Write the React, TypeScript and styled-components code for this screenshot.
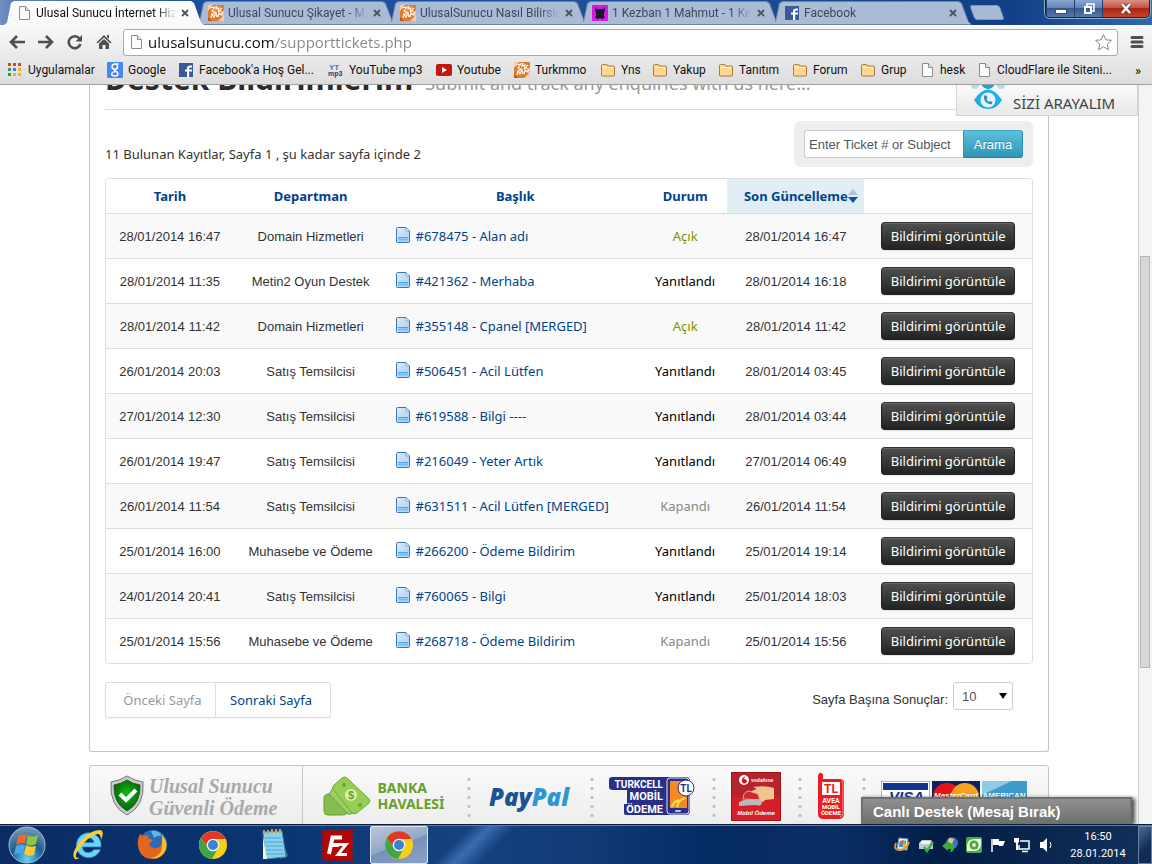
import React from "react";
import styled, { createGlobalStyle, css } from "styled-components";

const uiFont = `Roboto, "Open Sans", sans-serif`;
const siteFont = `"Noto Sans", "Open Sans", sans-serif`;
const plainFont = `"Liberation Sans", Arial, sans-serif`;

const GlobalStyle = createGlobalStyle`
  * { box-sizing: border-box; }
  body { margin: 0; background: #fff; font-family: ${plainFont}; font-size: 13px; color: #333; }
  button, input, select { font: inherit; margin: 0; }
  a { text-decoration: none; color: inherit; }
  svg { display: block; flex: none; }
`;

const Desktop = styled.div`
  display: flex;
  flex-direction: column;
  height: 100vh;
  overflow: hidden;
`;

/* ---------- browser frame ---------- */

const TitleBar = styled.div`
  display: flex;
  height: 25px;
  padding-left: 4px;
  background: linear-gradient(90deg, #6f8fc0 0, #5b7fb8 16px, #1c509c 200px, #1d4e9a 60%, #123f86 88%, #2f6aa8 100%);
`;

const TabList = styled.div`
  display: flex;
  align-items: flex-end;
  flex: 0 1 960px;
  min-width: 0;
`;

const Tab = styled.div<{ $active?: boolean }>`
  position: relative;
  display: flex;
  align-items: center;
  flex: 1 1 200px;
  min-width: 0;
  height: 24px;
  padding: 0 10px 0 12px;
  margin-right: -8px;
  z-index: ${(p) => (p.$active ? 2 : 1)};
  &::before, &::after {
    content: "";
    position: absolute;
    z-index: -1;
    inset: 0;
    clip-path: polygon(0 100%, 3px 90%, 7px 8%, 10px 0, calc(100% - 13px) 0, calc(100% - 10px) 8%, calc(100% - 3px) 90%, 100% 100%);
    background: ${(p) => (p.$active ? "#fff" : "#70839f")};
  }
  &::after {
    inset: 1px 1px ${(p) => (p.$active ? 0 : 1)}px 1px;
    background: ${(p) => (p.$active ? "linear-gradient(#fff, #f8f8f8)" : "#aabbd6")};
  }
`;

const TabTitle = styled.button<{ $active?: boolean }>`
  flex: 1;
  min-width: 0;
  padding: 0;
  margin-left: 4px;
  border: 0;
  background: none;
  text-align: left;
  overflow: hidden;
  white-space: nowrap;
  font-family: ${uiFont};
  font-size: 12px;
  line-height: 20px;
  color: ${(p) => (p.$active ? "#111" : "#3d4858")};
  mask-image: linear-gradient(90deg, #000 calc(100% - 20px), transparent);
`;

const TabClose = styled.button`
  padding: 0 3px;
  margin: 0 2px;
  border: 0;
  background: none;
`;

const NewTab = styled.button`
  align-self: center;
  width: 30px;
  height: 15px;
  margin-left: 8px;
  border: 1px solid #7f96bb;
  border-radius: 3px;
  background: #a9bad6;
  transform: skewX(20deg);
`;

const WindowControls = styled.div`
  display: flex;
  height: 18px;
  margin: 0 2px 0 auto;
  border: 1px solid #14233f;
  border-top: 0;
  border-radius: 0 0 5px 5px;
  overflow: hidden;
  box-shadow: 0 0 0 1px #8fa9cc;
`;

const WindowButton = styled.button<{ $close?: boolean }>`
  display: flex;
  align-items: center;
  justify-content: center;
  width: ${(p) => (p.$close ? 47 : 28)}px;
  padding: 0;
  border: 0;
  border-left: 1px solid #26406c;
  background: ${(p) =>
    p.$close
      ? "linear-gradient(#d99285, #c6533f 45%, #a82615 50%, #c8442a)"
      : "linear-gradient(#8ba6cf, #6484b8 45%, #36598f 50%, #5579ad)"};
`;

const Chrome = styled.header`
  border-top: 1px solid #fff;
  border-bottom: 1px solid #a0a0a0;
  background: linear-gradient(#f8f8f8, #dddddd);
  font-family: ${uiFont};
`;

const Toolbar = styled.div`
  display: flex;
  align-items: center;
  height: 32px;
  padding: 0 8px;
`;

const ToolButton = styled.button`
  display: flex;
  padding: 0;
  margin-right: 11px;
  border: 0;
  background: none;
`;

const AddressBar = styled.label`
  display: flex;
  align-items: center;
  flex: 1;
  height: 27px;
  padding: 0 4px;
  margin: 0 12px 0 0;
  border: 1px solid #a9a9a9;
  border-radius: 3px;
  background: #fff;
`;

const AddressInput = styled.input`
  flex: 1;
  min-width: 0;
  padding: 0;
  margin-left: 4px;
  border: 0;
  outline: 0;
  font-family: "Open Sans", "Noto Sans", sans-serif;
  font-size: 15px;
  line-height: 24px;
  color: transparent;
  background: linear-gradient(90deg, #111 127px, #858585 127px);
  background-clip: text;
  -webkit-background-clip: text;
`;

const Bookmarks = styled.nav`
  display: flex;
  align-items: center;
  height: 26px;
  padding: 0 11px 2px 7px;
  font-size: 12px;
  color: #111;
  white-space: nowrap;
`;

const Bookmark = styled.a<{ $width: number }>`
  display: flex;
  align-items: center;
  gap: 5px;
  flex: 0 0 ${(p) => p.$width}px;
`;

const More = styled.button`
  margin-left: auto;
  padding: 0;
  border: 0;
  background: none;
  font-size: 13px;
`;

/* ---------- web page ---------- */

const Viewport = styled.div`
  display: flex;
  flex: 1;
  min-height: 0;
`;

const PageArea = styled.div`
  position: relative;
  flex: 1;
  min-width: 0;
  overflow: hidden;
`;

const ScrollTrack = styled.div`
  width: 14px;
  padding: 171px 1px 0;
  border-left: 1px solid #d0d0d0;
  background: #f4f4f4;
`;

const ScrollThumb = styled.div`
  width: 10px;
  height: 412px;
  border: 1px solid #b4b4b4;
  background: #d8d8d8;
`;

const Card = styled.main`
  max-width: 960px;
  margin: 0 auto;
  padding: 0 15px 33px;
  border: 1px solid #c4c4c4;
  border-top: 0;
  border-radius: 0 0 3px 3px;
`;

const TitleRow = styled.div`
  display: flex;
  align-items: flex-end;
  height: 25px;
  padding-bottom: 12px;
  border-bottom: 1px solid #ddd;
  font-family: ${siteFont};
`;

const PageTitle = styled.h1`
  margin: 0;
  font-size: 30px;
  line-height: 36px;
  color: #2b2b2b;
  white-space: nowrap;
`;

const Subtitle = styled.small`
  margin-left: 12px;
  font-size: 18px;
  line-height: 28px;
  color: #999;
  white-space: nowrap;
`;

const SearchRow = styled.div`
  display: flex;
  align-items: center;
  justify-content: space-between;
  margin: 11px 0;
`;

const Summary = styled.p`
  margin: 20px 0 0;
  font-family: ${siteFont};
  font-size: 13px;
`;

const SearchForm = styled.form`
  display: flex;
  padding: 9px 10px;
  border-radius: 6px;
  background: #eee;
`;

const SearchInput = styled.input`
  width: 159px;
  height: 28px;
  padding: 0 4px;
  border: 1px solid #ccc;
  border-right: 0;
  border-radius: 3px 0 0 3px;
  font-size: 13px;
  &::placeholder { color: #555; opacity: 1; }
`;

const SearchButton = styled.button`
  width: 60px;
  height: 28px;
  padding: 0;
  border: 1px solid #2f96b4;
  border-color: #46a5c3 #2f96b4 #24829f;
  border-radius: 0 3px 3px 0;
  background: linear-gradient(#5bc0de, #2f96b4);
  color: #fff;
  font-size: 13px;
  text-shadow: 0 -1px 0 rgba(0, 0, 0, 0.25);
`;

const TableFrame = styled.div`
  border: 1px solid #ddd;
  border-radius: 4px;
  overflow: hidden;
`;

const Table = styled.table`
  width: 100%;
  table-layout: fixed;
  border-collapse: separate;
  border-spacing: 0;
  text-align: center;
`;

const HeadCell = styled.th<{ $width: string; $sorted?: boolean }>`
  width: ${(p) => p.$width};
  height: 34px;
  padding: 0;
  background: ${(p) => (p.$sorted ? "#e1eef4" : "#fff")};
  font-family: ${siteFont};
  font-size: 13px;
`;

const HeadLink = styled.a<{ $sorted?: boolean }>`
  display: inline-flex;
  align-items: center;
  padding-left: ${(p) => (p.$sorted ? 10 : 0)}px;
  color: #00438a;
`;

const Row = styled.tr`
  &:nth-child(odd) { background: #f9f9f9; }
`;

const Cell = styled.td<{ $left?: boolean }>`
  height: 45px;
  padding: 0 ${(p) => (p.$left ? 8 : 0)}px;
  border-top: 1px solid #ddd;
  text-align: ${(p) => (p.$left ? "left" : "center")};
  white-space: nowrap;
`;

const TicketLink = styled.a`
  display: flex;
  align-items: center;
  gap: 4px;
  font-family: ${siteFont};
  font-size: 13px;
  color: #00438a;
`;

const Status = styled.span<{ $tone: string }>`
  font-family: ${siteFont};
  font-size: 13px;
  color: ${(p) => p.$tone};
`;

const ViewButton = styled.button`
  width: 134px;
  height: 28px;
  padding: 0;
  border: 1px solid #222;
  border-top-color: #333;
  border-radius: 4px;
  background: linear-gradient(#505050, #222);
  box-shadow: inset 0 1px 0 #666, 0 1px 1px rgba(0, 0, 0, 0.1);
  color: #fff;
  font-family: ${siteFont};
  font-size: 13px;
`;

const BottomRow = styled.div`
  display: flex;
  align-items: flex-start;
  justify-content: space-between;
  margin-top: 18px;
`;

const Pager = styled.nav`
  display: flex;
  border: 1px solid #ddd;
  border-radius: 3px;
  box-shadow: 0 1px 2px rgba(0, 0, 0, 0.05);
  font-family: ${siteFont};
  font-size: 13px;
  line-height: 34px;
`;

const PagerLink = styled.a<{ $off?: boolean }>`
  width: ${(p) => (p.$off ? 110 : 114)}px;
  padding-right: ${(p) => (p.$off ? 0 : 4)}px;
  padding-left: ${(p) => (p.$off ? 4 : 0)}px;
  border-right: ${(p) => (p.$off ? "1px solid #ddd" : "0")};
  color: ${(p) => (p.$off ? "#999" : "#00438a")};
  text-align: center;
`;

const PerPage = styled.div`
  display: flex;
  align-items: center;
  gap: 5px;
  margin-right: 20px;
  font-size: 13px;
`;

const PerPageLabel = styled.label`
  padding-top: 6px;
`;

const SelectWrap = styled.span`
  position: relative;
  &::after {
    content: "";
    position: absolute;
    right: 6px;
    top: 11px;
    border: 4px solid transparent;
    border-top: 6px solid #000;
    border-bottom: 0;
    pointer-events: none;
  }
`;

const PerPageSelect = styled.select`
  appearance: none;
  display: block;
  width: 60px;
  height: 28px;
  padding: 0 8px;
  border: 1px solid #ccc;
  border-radius: 3px;
  background: #fff;
  color: #555;
`;

const CallWidget = styled.a`
  position: absolute;
  top: 0;
  right: 0;
  display: flex;
  align-items: flex-end;
  gap: 8px;
  width: 182px;
  height: 31px;
  padding: 0 0 3px 14px;
  border: 1px solid #d5d5d5;
  border-top: 0;
  background: linear-gradient(#fafafa, #e9e9e9);
  font-family: ${siteFont};
  font-size: 15px;
  line-height: 18px;
  color: #444;
  white-space: nowrap;
`;

const Payments = styled.footer`
  display: flex;
  max-width: 960px;
  height: 90px;
  margin: 13px auto 0;
  border: 1px solid #c4c4c4;
  border-radius: 3px;
  background: linear-gradient(#fafafa, #ededed 58px);
`;

const Secure = styled.div`
  display: flex;
  gap: 4px;
  width: 213px;
  padding: 9px 0 0 19px;
  border-right: 1px solid #c8c8c8;
  font-family: "Liberation Serif", serif;
  font-style: italic;
  font-weight: bold;
  font-size: 20px;
  line-height: 22px;
  color: #a9a9a9;
  white-space: nowrap;
`;

const Method = styled.div<{ $width: number; $last?: boolean }>`
  display: flex;
  align-items: center;
  justify-content: center;
  width: ${(p) => p.$width}px;
  height: 59px;
  padding: 9px 0 8px;
  ${(p) =>
    !p.$last &&
    css`
      background: radial-gradient(circle, #bdbdbd 1px, transparent 2px) right 0 / 4px 9px repeat-y content-box;
    `}
  & > * { margin-right: ${(p) => (p.$last ? 0 : 7)}px; }
`;

const BankText = styled.span`
  font-family: "Noto Sans", sans-serif;
  font-size: 14px;
  font-weight: bold;
  line-height: 16px;
  color: #689f2b;
`;

const PayPalText = styled.span`
  font-family: "Open Sans", sans-serif;
  font-size: 24px;
  font-weight: 800;
  font-style: italic;
  color: #1a5496;
`;

const PayPalTail = styled.span`
  color: #2f96d6;
`;

const ChatBar = styled.button`
  position: absolute;
  right: 6px;
  bottom: 0;
  width: 271px;
  height: 27px;
  padding: 0 0 0 10px;
  border: 2px solid #6b7072;
  border-bottom: 0;
  background: linear-gradient(#909090, #6e6e6e);
  box-shadow: 3px 1px 4px rgba(0, 0, 0, 0.7);
  color: #fff;
  font-size: 15px;
  font-weight: bold;
  text-align: left;
`;

/* ---------- task bar ---------- */

const TaskBar = styled.div`
  display: flex;
  align-items: center;
  height: 40px;
  border-top: 1px solid #0b1d38;
  box-shadow: inset 0 1px 0 #5a7ba6;
  background:
    linear-gradient(135deg, transparent 0 334px, rgba(90, 150, 225, 0.5) 348px, transparent 366px) no-repeat,
    linear-gradient(90deg, #0a2c62, #0b3574 25%, #16427f 40%, #123b78 50%, #052b63 62%, #0a2f66 72%, #021d45 82%, #12305a);
`;

const TaskButton = styled.button<{ $active?: boolean; $width?: number }>`
  display: flex;
  align-items: center;
  justify-content: center;
  width: ${(p) => p.$width ?? 62}px;
  height: 38px;
  padding: 0;
  border: 0;
  background: none;
  ${(p) =>
    p.$active &&
    css`
      border: 1px solid #dde6f2;
      border-radius: 2px;
      background: linear-gradient(160deg, #b9c7da, #93a7c6 50%, #7690ba 50%, #8ba3c8);
    `}
`;

const Tray = styled.div`
  display: flex;
  align-items: center;
  gap: 8px;
  margin-left: auto;
`;

const Clock = styled.time`
  width: 56px;
  margin: 0 4px 0 8px;
  font-family: ${uiFont};
  font-size: 11px;
  line-height: 17px;
  text-align: center;
  color: #fff;
`;

const ShowDesktop = styled.button`
  width: 14px;
  height: 38px;
  padding: 0;
  border: 1px solid #6481a8;
  background: linear-gradient(135deg, #4f6b92, #122c54 60%);
`;

/* ---------- drawings ---------- */

const FileIcon = () => (
  <svg width="16" height="16" viewBox="0 0 16 16">
    <path d="M3.5 1.5h6l4 4v9h-10z" fill="#fafafa" stroke="#8c8c8c" />
    <path d="M9.500 1.500v4h4" fill="#e6e6e6" stroke="#8c8c8c" />
  </svg>
);

const TurkmmoIcon = () => (
  <svg width="16" height="16" viewBox="0 0 16 16">
    <rect width="16" height="16" rx="1" fill="#d97d33" />
    <path d="M0 0h5L0 6zM10 16h6v-6z" fill="#f8cf9f" />
    <path d="M0 12l4 4H0z" fill="#b4591c" />
    <path d="M2 3l5-1-3 4 3 1-2 2M9 1l-1 3 3-1-1 4M14 3l-3 3 3 1M3 13l1-4 2 3 2-4 1 4M10 12l1-4 2 2 2-3v4" fill="none" stroke="#fff3e2" strokeWidth="1.200" />
  </svg>
);

const FacebookIcon = () => (
  <svg width="16" height="14" viewBox="0 0 16 14">
    <rect x="1" width="14" height="14" fill="#3b5998" />
    <path d="M14 2.500H12C10 2.500 9 3.500 9 5v1.500H7V8.500h2V14h2.200V8.500H14V6.500h-2.800V5.200q0-.7.900-.7H14z" fill="#fff" />
  </svg>
);

const KezbanIcon = () => (
  <svg width="16" height="16" viewBox="0 0 16 16">
    <rect width="16" height="16" rx="1" fill="#d916e6" />
    <path d="M3 2l2 2h6l2-2v4l-1 1v4l1 2h-2v1H9v-1H7v1H5v-1H3l1-2V7L3 6z" fill="#111a24" />
  </svg>
);

const AppsIcon = () => {
  const colors = ["#e2402c", "#e2402c", "#e2402c", "#2f9e4f", "#3f7fe8", "#f2b01e", "#2f9e4f", "#f2b01e", "#f2b01e"];
  return (
    <svg width="16" height="14" viewBox="0 0 16 14">
      {colors.map((c, i) => (
        <rect key={i} x={(i % 3) * 5 + 1} y={Math.floor(i / 3) * 5} width="3" height="3" fill={c} />
      ))}
    </svg>
  );
};

const GoogleIcon = () => (
  <svg width="16" height="16" viewBox="0 0 16 16">
    <rect width="16" height="16" rx="1" fill="#4787f3" />
    <path d="M11.500 2H8C6 2 5 3.300 5 4.800S6.200 7.300 8 7.300 10.500 6 10.500 4.800 9.500 2 8 2M8 7.300C7 8.500 7.800 9 9 9.500c1.500.7 2 1.300 2 2.200C11 13.300 9.500 14 7.800 14S4.700 13.200 4.700 12 6 9.800 8.500 9.600" fill="none" stroke="#fff" strokeWidth="1.400" />
  </svg>
);

const Mp3Icon = () => (
  <svg width="16" height="16" viewBox="0 0 16 16" fontFamily="Liberation Sans, sans-serif" fontWeight="bold">
    <text x="1" y="8" fontSize="8" fill="#5673c4">YT</text>
    <text x="0" y="14" fontSize="7" fill="#2c3c7c">mp3</text>
  </svg>
);

const YoutubeIcon = () => (
  <svg width="16" height="16" viewBox="0 0 16 16">
    <rect y="2" width="16" height="12" rx="2" fill="#c4170f" />
    <path d="M6 5v6l5-3z" fill="#fff" />
  </svg>
);

const FolderIcon = () => (
  <svg width="16" height="16" viewBox="0 0 16 16">
    <path d="M1.500 3.500q0-1 1-1h4q1 0 1 1.500h6q1 0 1 1v8q0 1-1 1h-11q-1 0-1-1z" fill="#fbd88f" stroke="#a87a45" />
    <path d="M2.500 5.500h11" stroke="#fff2cd" />
  </svg>
);

const BackIcon = () => (
  <svg width="18" height="16" viewBox="0 0 18 16">
    <path d="M9 2L3 8l6 6M3 8h14" fill="none" stroke="#4f4f4f" strokeWidth="2.600" />
  </svg>
);
const ForwardIcon = () => (
  <svg width="18" height="16" viewBox="0 0 18 16">
    <path d="M9 2l6 6-6 6M15 8H1" fill="none" stroke="#4f4f4f" strokeWidth="2.600" />
  </svg>
);
const ReloadIcon = () => (
  <svg width="18" height="16" viewBox="0 0 18 16">
    <path d="M13.500 4.500A6 6 0 1 0 14.500 10" fill="none" stroke="#4f4f4f" strokeWidth="2.500" />
    <path d="M16 1v6.500H9.500z" fill="#4f4f4f" />
  </svg>
);
const HomeIcon = () => (
  <svg width="17" height="16" viewBox="0 0 17 16">
    <path d="M9 1l7.500 7.500-1 1L9 3.500 2.500 9.500l-1-1zM12 1h2v4l-2-2zM9 5l5 4.500V15h-3.500v-4h-3v4H4V9.500z" fill="#4f4f4f" />
  </svg>
);
const StarIcon = () => (
  <svg width="19" height="19" viewBox="0 0 19 19">
    <path d="M9.500 1.500l2.300 5.300 5.700.5-4.300 3.800 1.300 5.700-5-3-5 3 1.300-5.700L1.500 7.300l5.700-.5z" fill="#fff" stroke="#888" strokeLinejoin="round" />
  </svg>
);
const MenuIcon = () => (
  <svg width="14" height="14" viewBox="0 0 14 14">
    <path d="M2 2.500h10M2 7h10M2 11.500h10" stroke="#505050" strokeWidth="3" strokeLinecap="round" />
  </svg>
);
const CloseIcon = () => (
  <svg width="8" height="8" viewBox="0 0 8 8">
    <path d="M1 1l6 6M7 1L1 7" stroke="#4c5560" strokeWidth="1.800" />
  </svg>
);

const SortIcon = () => (
  <svg width="10" height="16" viewBox="0 0 10 16">
    <path d="M0 7l5-6 5 6z" fill="#b0c2dc" />
    <path d="M0 9h10l-5 6z" fill="#0f53a8" />
  </svg>
);

const DocumentIcon = () => (
  <svg width="16" height="18" viewBox="0 0 16 18">
    <defs>
      <linearGradient id="docFill" x2="1" y2="1">
        <stop offset="0" stopColor="#dcebfb" />
        <stop offset="1" stopColor="#a9cdf5" />
      </linearGradient>
    </defs>
    <path d="M1.500 1.500q0-1 1-1H11l3.500 3.500v10.500q0 1-1 1h-11q-1 0-1-1z" fill="url(#docFill)" stroke="#3f74bd" />
    <path d="M11 1v3h3" fill="#fff" stroke="#7ba6dc" />
    <path d="M3 10.500h10" stroke="#4ba3ec" />
    <path d="M3 12.500h10" stroke="#64c1fb" strokeWidth="2" />
  </svg>
);

const CallIcon = () => (
  <svg width="34" height="29" viewBox="0 0 34 29">
    <circle cx="4" cy="2" r="4" fill="#b5dcf2" />
    <circle cx="30" cy="2" r="4" fill="#b5dcf2" />
    <circle cx="17" cy="-1" r="7" fill="#1ba3dc" />
    <path d="M3 17Q17-4 31 17 26 26 17 26T3 17z" fill="#22aee4" />
    <circle cx="17" cy="17" r="7.500" fill="#e9f7fd" />
    <path d="M13 12.500q-1 8 7.500 9l1-2.500-2.500-1-1 1q-2-1-2.500-3l1-1-1-2.500z" fill="#2a8fc6" />
  </svg>
);

const ShieldIcon = () => (
  <svg width="36" height="42" viewBox="0 0 36 42">
    <defs>
      <radialGradient id="shieldFill" cy="0.45">
        <stop offset="0" stopColor="#18b818" />
        <stop offset="1" stopColor="#046d0b" />
      </radialGradient>
    </defs>
    <path d="M18 1q8 5 16 6 2 24-16 33Q0 31 2 7 10 6 18 1z" fill="#c9cccc" stroke="#777" />
    <path d="M18 5q6 4 13 5 1 18-13 26Q4 28 5 10q7-1 13-5z" fill="url(#shieldFill)" stroke="#2b5d2c" />
    <path d="M11 19l6 6 10-10" fill="none" stroke="#fff" strokeWidth="4" />
  </svg>
);

const MoneyIcon = () => (
  <svg width="48" height="40" viewBox="0 0 48 40">
    <path d="M1 21q1-3 4-3l20 1v18q-3 2-6 2H5q-4 0-4-4z" fill="#86bd50" stroke="#639f31" />
    <path d="M10 12l4-3 22 24-8 5q-2 1-4-1L6 18z" fill="#9ccd62" stroke="#6aa63a" />
    <path d="M19 2q3-2 5 0l22 21q2 2 0 4L34 37q-3 2-5 0L10 13q-1-2 1-4z" fill="#97cd54" stroke="#6cab36" />
    <circle cx="28" cy="19" r="6" fill="#d9efb6" />
    <text x="25" y="23" fontSize="11" fontWeight="bold" fontFamily="Liberation Sans, sans-serif" fill="#64a028">$</text>
    <circle cx="21" cy="9" r="2" fill="#67a631" />
    <circle cx="37" cy="29" r="2" fill="#67a631" />
  </svg>
);

const TurkcellLogo = () => (
  <svg width="86" height="40" viewBox="0 0 86 40" fontFamily="Roboto, sans-serif" fontWeight="bold">
    <path d="M3 1h74q4 0 4 4v30q0 4-4 4H17q-2 0-2-2V28h3V14H4Q0 14 0 11V4Q0 1 3 1z" fill="#292f87" />
    <g fill="#fff" fontSize="12" textAnchor="end">
      <text x="54" y="12" fontSize="10">TURKCELL</text>
      <text x="54" y="24" fontSize="11">MOBİL</text>
      <text x="54" y="37" fontSize="11">ÖDEME</text>
    </g>
    <rect x="58" y="2" width="22" height="36" rx="3" fill="#292f87" stroke="#dfe2ff" />
    <rect x="61" y="5" width="17" height="27" fill="#f38a24" />
    <path d="M63 31q1-5 7-7M68 31q1-7 8-9" fill="none" stroke="#fbe34a" strokeWidth="2" />
    <circle cx="77" cy="12" r="8" fill="#fff" stroke="#292f87" />
    <text x="77" y="16" fontSize="10" fill="#292f87" textAnchor="middle">TL</text>
    <rect x="66" y="34" width="6" height="2" rx="1" fill="#bfc5f5" />
  </svg>
);

const VodafoneLogo = () => (
  <svg width="50" height="49" viewBox="0 0 50 49" fontFamily="Liberation Sans, sans-serif" fontWeight="bold" fill="#fff">
    <rect x="0.500" y="0.500" width="49" height="48" fill="#d41f2a" stroke="#a5121b" />
    <path d="M1 1h48v24Q25 30 1 24z" fill="#b5232c" />
    <circle cx="13" cy="8" r="5" />
    <path d="M14 4q-4 3-3 6 2 3 5 0 0-3-3-3z" fill="#d21620" />
    <text x="20" y="10" fontSize="5">vodafone</text>
    <path d="M22 15q13-2 21 1v11l-9 1q-3 4-8 1l-6-5-4 1q3-7 10-8z" fill="#efc48d" />
    <path d="M12 27q0-7 6-8l9 3 2 6z" fill="#d32630" stroke="#f0a3a3" />
    <path d="M8 30l5-2 16-1 2 5q-3 3-6 1l-17 1z" fill="#b9b9b9" />
    <text x="25" y="43" fontSize="6" fontStyle="italic" textAnchor="middle">Mobil Ödeme</text>
  </svg>
);

const AveaLogo = () => (
  <svg width="30" height="48" viewBox="0 0 30 48" fontFamily="Roboto, sans-serif" fontWeight="bold">
    <path d="M2 3q3-5 5 0v4h17q4 0 4 4v31q0 4-4 5H6q-4-1-4-5z" fill="#ea1c24" />
    <path d="M25 8q2 1 2 4v29q0 3-3 4" fill="none" stroke="#f9888c" />
    <rect x="6" y="10" width="18" height="13" fill="#fff" />
    <text x="15" y="21" fontSize="12" fill="#ea1c24" textAnchor="middle">TL</text>
    <g fill="#fff" fontSize="7" textAnchor="middle">
      <text x="15" y="31">AVEA</text>
      <text x="15" y="37" fontSize="6">MOBİL</text>
      <text x="15" y="43" fontSize="6">ÖDEME</text>
    </g>
  </svg>
);

const CardsLogo = () => (
  <svg width="146" height="30" viewBox="0 0 146 30" fontFamily="Liberation Sans, sans-serif" fontWeight="bold">
    <rect x="0.500" y="0.500" width="48" height="29" fill="#fff" stroke="#9fb6d6" />
    <rect x="2" y="2" width="45" height="7" fill="#12358f" />
    <text x="8" y="21" fontSize="15" fontStyle="italic" fill="#12358f">VISA</text>
    <rect x="51" width="48" height="30" fill="#10205f" />
    <circle cx="66" cy="16" r="14" fill="#e8121b" />
    <circle cx="84" cy="16" r="14" fill="#f5a21c" />
    <text x="75" y="17" fontSize="8" fontStyle="italic" fill="#fff" textAnchor="middle">MasterCard</text>
    <rect x="101" width="45" height="30" fill="#3f9bcb" />
    <path d="M101 0h30l-30 14z" fill="#8fcbe4" />
    <text x="123" y="17" fontSize="8" fill="#fff" textAnchor="middle">AMERICAN</text>
  </svg>
);

const ChromeIcon = () => (
  <svg width="28" height="28" viewBox="0 0 28 28">
    <circle cx="14" cy="14" r="14" fill="#f6cf1c" />
    <path d="M1.900 7A14 14 0 0 1 26.500 8H14a6 6 0 0 0-5.600 8z" fill="#dc3a2b" />
    <path d="M1.900 7A14 14 0 0 0 13 28l6-11-5 3a6 6 0 0 1-5-3z" fill="#3fa648" />
    <circle cx="14" cy="14" r="6.300" fill="#f2f2f2" />
    <circle cx="14" cy="14" r="5" fill="#3b83cd" />
  </svg>
);

const StartIcon = () => (
  <svg width="38" height="38" viewBox="0 0 38 38">
    <defs>
      <radialGradient id="orb" cy="0.9" r="0.9">
        <stop offset="0" stopColor="#5fd5ff" />
        <stop offset="0.5" stopColor="#1c5b8f" />
        <stop offset="1" stopColor="#7d9dbd" />
      </radialGradient>
    </defs>
    <circle cx="19" cy="19" r="18" fill="url(#orb)" stroke="#a5bfd8" />
    <path d="M10 10q4-3 9-1l-2 9q-4-2-9 1z" fill="#ea6a33" />
    <path d="M20 9q4 3 10 0l-2 9q-5 3-10 0z" fill="#8cc63f" />
    <path d="M8 20q4-3 9-1l-2 9q-5-2-9 1z" fill="#4aa6e8" />
    <path d="M18 19q4 3 10 1l-2 9q-5 2-10-1z" fill="#fbc934" />
  </svg>
);

const IEIcon = () => (
  <svg width="32" height="32" viewBox="0 0 32 32">
    <path d="M22 20.500H28.500A12.500 12.500 0 1 1 29 14V18H10.500Q11 23.500 16 23.500 20 23.500 22 20.500z M10.500 13.500H22Q21 9 16 9T10.500 13.500z" fill="#6fd3f8" stroke="#1c7fc4" strokeWidth="0.800" fillRule="evenodd" />
    <path d="M3 30Q-2 25 8 13T28 1q5 1 1 10 0-7-4-6-7 2-14 10T4 26q-1 3 3 3-2 2-4 1z" fill="#fbcf2f" />
  </svg>
);

const FirefoxIcon = () => (
  <svg width="31" height="31" viewBox="0 0 31 31">
    <circle cx="16" cy="15" r="14" fill="#2a6cb8" />
    <path d="M14 2q8-1 11 5-5-1-8 2z" fill="#62b5e5" />
    <path d="M3 5l3 2 5-1q-1 3 2 4l3 1-4 4q2 5 8 4 4-1 5-5V8q6 6 4 13-4 9-13 9Q5 30 2 21-1 12 3 5z" fill="#e3661f" />
    <path d="M25 6q8 9 2 18-6 7-13 5 11-2 11-12z" fill="#f9bd31" />
  </svg>
);

const NotepadIcon = () => (
  <svg width="28" height="32" viewBox="0 0 28 32">
    <path d="M19 4l8 23-8 3z" fill="#426f9f" />
    <path d="M2 3l19-1 4 26-21 2z" fill="#8bd0ee" stroke="#467fa8" />
    <path d="M2 8l4 22h-4z" fill="#eef9df" />
    <path d="M4 9h16M4 13h17M5 17h17M5 21h17M5 25h18" stroke="#4aa4d2" />
    <path d="M3 1v4M7 1v4M11 0v4M15 0v4M19 0v4" stroke="#c2a64c" strokeWidth="2" />
  </svg>
);

const FileZillaIcon = () => (
  <svg width="32" height="32" viewBox="0 0 32 32">
    <rect x="2" y="2" width="28" height="28" fill="#b50505" />
    <rect x="1" y="1" width="30" height="30" fill="none" stroke="#b50505" strokeWidth="2" strokeDasharray="3 2" />
    <path d="M7 25L10.500 8.500h9.500M9 16h8" fill="none" stroke="#fff" strokeWidth="4" />
    <path d="M14.500 15.500h9.500l-8 10h9" fill="none" stroke="#fff" strokeWidth="3" />
  </svg>
);

const UpdateTrayIcon = () => (
  <svg width="16" height="16" viewBox="0 0 16 16">
    <path d="M5 1l9 1-1 11-10-1z" fill="#dff1ff" stroke="#69a5d0" />
    <path d="M6 4l3-1v4H5z" fill="#e65d28" /><path d="M9 3l3 1v3H9z" fill="#7ab934" />
    <path d="M5 7h4v3H5z" fill="#3e93db" /><path d="M9 7h3v4H9z" fill="#f3bf27" />
    <path d="M2 6q-3 8 5 7 6-1 8-8" fill="none" stroke="#e59625" strokeWidth="2" />
  </svg>
);
const PrinterTrayIcon = () => (
  <svg width="16" height="16" viewBox="0 0 16 16">
    <path d="M2 5l2-2h9l2 3v6H1V6z" fill="#c3c8cc" /><path d="M3 4h9v3H3z" fill="#f2f2f2" />
    <path d="M6 10l3 4 6-9" fill="none" stroke="#33b044" strokeWidth="2.500" />
  </svg>
);
const GlobeTrayIcon = () => (
  <svg width="16" height="16" viewBox="0 0 16 16">
    <circle cx="10" cy="6" r="6" fill="#3273ce" /><path d="M7 1l5 1-2 5-4-2z" fill="#f0d04a" />
    <path d="M0 9l6-5v3h6v5q-1 3-4 3l1-3H6v2z" fill="#3bac3a" />
  </svg>
);
const EyeTrayIcon = () => (
  <svg width="16" height="16" viewBox="0 0 16 16">
    <rect width="16" height="16" rx="2" fill="#48ab48" />
    <path d="M1 14V8Q2 2 8 2h7v6q-1 6-7 6z" fill="#e9f6d9" />
    <circle cx="8" cy="8" r="4.500" fill="#49a541" /><circle cx="8" cy="8" r="2" fill="#e3f3c7" />
  </svg>
);
const FlagTrayIcon = () => (
  <svg width="16" height="16" viewBox="0 0 16 16">
    <path d="M2 2v13" stroke="#fff" strokeWidth="1.500" /><path d="M3 2h6v2h6l-2 5H9V8H3z" fill="#fff" />
  </svg>
);
const NetworkTrayIcon = () => (
  <svg width="16" height="16" viewBox="0 0 16 16">
    <path d="M6 4h9v8H5V8M8 14.500h6" fill="none" stroke="#fff" strokeWidth="1.500" />
    <path d="M0 1h5v4l-1 1v7H2V6L0 5z" fill="#fff" />
  </svg>
);
const SoundTrayIcon = () => (
  <svg width="16" height="16" viewBox="0 0 16 16">
    <path d="M2 5h3l4-4v14l-4-4H2z" fill="#fff" /><path d="M12 5q2 3 0 6" fill="none" stroke="#fff" />
  </svg>
);

/* ---------- data ---------- */

const tabs = [
  { title: "Ulusal Sunucu İnternet Hiz", icon: <FileIcon />, active: true },
  { title: "Ulusal Sunucu Şikayet - M", icon: <TurkmmoIcon /> },
  { title: "UlusalSunucu Nasıl Bilirsin", icon: <TurkmmoIcon /> },
  { title: "1 Kezban 1 Mahmut - 1 Ke", icon: <KezbanIcon /> },
  { title: "Facebook", icon: <FacebookIcon /> },
];

const bookmarks = [
  { label: "Uygulamalar", icon: <AppsIcon />, width: 100 },
  { label: "Google", icon: <GoogleIcon />, width: 71 },
  { label: "Facebook'a Hoş Gel...", icon: <FacebookIcon />, width: 150 },
  { label: "YouTube mp3", icon: <Mp3Icon />, width: 108 },
  { label: "Youtube", icon: <YoutubeIcon />, width: 78 },
  { label: "Turkmmo", icon: <TurkmmoIcon />, width: 86 },
  { label: "Yns", icon: <FolderIcon />, width: 52 },
  { label: "Yakup", icon: <FolderIcon />, width: 66 },
  { label: "Tanıtım", icon: <FolderIcon />, width: 74 },
  { label: "Forum", icon: <FolderIcon />, width: 68 },
  { label: "Grup", icon: <FolderIcon />, width: 59 },
  { label: "hesk", icon: <FileIcon />, width: 57 },
  { label: "CloudFlare ile Siteni...", icon: <FileIcon />, width: 140 },
];

const tones: Record<string, string> = { Açık: "#779500", Yanıtlandı: "#000", Kapandı: "#888" };

const tickets = [
  ["28/01/2014 16:47", "Domain Hizmetleri", "#678475 - Alan adı", "Açık", "28/01/2014 16:47"],
  ["28/01/2014 11:35", "Metin2 Oyun Destek", "#421362 - Merhaba", "Yanıtlandı", "28/01/2014 16:18"],
  ["28/01/2014 11:42", "Domain Hizmetleri", "#355148 - Cpanel [MERGED]", "Açık", "28/01/2014 11:42"],
  ["26/01/2014 20:03", "Satış Temsilcisi", "#506451 - Acil Lütfen", "Yanıtlandı", "28/01/2014 03:45"],
  ["27/01/2014 12:30", "Satış Temsilcisi", "#619588 - Bilgi ----", "Yanıtlandı", "28/01/2014 03:44"],
  ["26/01/2014 19:47", "Satış Temsilcisi", "#216049 - Yeter Artık", "Yanıtlandı", "27/01/2014 06:49"],
  ["26/01/2014 11:54", "Satış Temsilcisi", "#631511 - Acil Lütfen [MERGED]", "Kapandı", "26/01/2014 11:54"],
  ["25/01/2014 16:00", "Muhasebe ve Ödeme", "#266200 - Ödeme Bildirim", "Yanıtlandı", "25/01/2014 19:14"],
  ["24/01/2014 20:41", "Satış Temsilcisi", "#760065 - Bilgi", "Yanıtlandı", "25/01/2014 18:03"],
  ["25/01/2014 15:56", "Muhasebe ve Ödeme", "#268718 - Ödeme Bildirim", "Kapandı", "25/01/2014 15:56"],
];

const columns = [
  { label: "Tarih", width: "13.8%" },
  { label: "Departman", width: "16.6%" },
  { label: "Başlık", width: "27.6%" },
  { label: "Durum", width: "9.1%" },
  { label: "Son Güncelleme", width: "14.8%", sorted: true },
  { label: "", width: "18.1%" },
];

export default function App() {
  return (
    <Desktop>
      <GlobalStyle />
      <TitleBar>
        <TabList>
          {tabs.map((t) => (
            <Tab key={t.title} $active={t.active}>
              {t.icon}
              <TabTitle $active={t.active}>{t.title}</TabTitle>
              <TabClose aria-label="Sekmeyi kapat"><CloseIcon /></TabClose>
            </Tab>
          ))}
        </TabList>
        <NewTab aria-label="Yeni sekme" />
        <WindowControls>
          <WindowButton aria-label="Küçült">
            <svg width="12" height="10" viewBox="0 0 12 10"><rect x="0.500" y="5.500" width="11" height="4" fill="#fff" stroke="#44546e" /></svg>
          </WindowButton>
          <WindowButton aria-label="Önceki boyut">
            <svg width="12" height="12" viewBox="0 0 12 12"><path d="M4 3V1h7v7H9" fill="none" stroke="#fff" strokeWidth="1.500" /><rect x="2" y="4" width="6" height="6" fill="none" stroke="#fff" strokeWidth="2" /></svg>
          </WindowButton>
          <WindowButton aria-label="Kapat" $close>
            <svg width="12" height="11" viewBox="0 0 12 11"><path d="M2 1l8 9M10 1L2 10" stroke="#5d3b3b" strokeWidth="4" /><path d="M2 1l8 9M10 1L2 10" stroke="#fff" strokeWidth="2.500" /></svg>
          </WindowButton>
        </WindowControls>
      </TitleBar>

      <Chrome>
        <Toolbar>
          <ToolButton aria-label="Geri"><BackIcon /></ToolButton>
          <ToolButton aria-label="İleri"><ForwardIcon /></ToolButton>
          <ToolButton aria-label="Yenile"><ReloadIcon /></ToolButton>
          <ToolButton aria-label="Ana sayfa"><HomeIcon /></ToolButton>
          <AddressBar>
            <FileIcon />
            <AddressInput aria-label="Adres" defaultValue="ulusalsunucu.com/supporttickets.php" />
            <StarIcon />
          </AddressBar>
          <MenuIcon />
        </Toolbar>
        <Bookmarks>
          {bookmarks.map((b) => (
            <Bookmark key={b.label} href="#" $width={b.width}>{b.icon}{b.label}</Bookmark>
          ))}
          <More>»</More>
        </Bookmarks>
      </Chrome>

      <Viewport>
        <PageArea>
          <Card>
            <TitleRow>
              <PageTitle>Destek Bildirimlerim</PageTitle>
              <Subtitle>Submit and track any enquiries with us here...</Subtitle>
            </TitleRow>
            <SearchRow>
              <Summary>11 Bulunan Kayıtlar, Sayfa 1 , şu kadar sayfa içinde 2</Summary>
              <SearchForm onSubmit={(e) => e.preventDefault()}>
                <SearchInput aria-label="Arama" placeholder="Enter Ticket # or Subject" />
                <SearchButton>Arama</SearchButton>
              </SearchForm>
            </SearchRow>
            <TableFrame>
              <Table>
                <thead>
                  <tr>
                    {columns.map((c) => (
                      <HeadCell key={c.label} $width={c.width} $sorted={c.sorted}>
                        {c.label && <HeadLink href="#" $sorted={c.sorted}>{c.label}{c.sorted && <SortIcon />}</HeadLink>}
                      </HeadCell>
                    ))}
                  </tr>
                </thead>
                <tbody>
                  {tickets.map(([date, dept, subject, status, updated]) => (
                    <Row key={subject}>
                      <Cell>{date}</Cell>
                      <Cell>{dept}</Cell>
                      <Cell $left><TicketLink href="#"><DocumentIcon />{subject}</TicketLink></Cell>
                      <Cell><Status $tone={tones[status]}>{status}</Status></Cell>
                      <Cell>{updated}</Cell>
                      <Cell><ViewButton>Bildirimi görüntüle</ViewButton></Cell>
                    </Row>
                  ))}
                </tbody>
              </Table>
            </TableFrame>
            <BottomRow>
              <Pager>
                <PagerLink href="#" $off>Önceki Sayfa</PagerLink>
                <PagerLink href="#">Sonraki Sayfa</PagerLink>
              </Pager>
              <PerPage>
                <PerPageLabel htmlFor="per-page">Sayfa Başına Sonuçlar:</PerPageLabel>
                <SelectWrap>
                  <PerPageSelect id="per-page" defaultValue="10">
                    <option>10</option>
                    <option>25</option>
                    <option>50</option>
                  </PerPageSelect>
                </SelectWrap>
              </PerPage>
            </BottomRow>
          </Card>
          <Payments>
            <Secure>
              <ShieldIcon />
              <span>Ulusal Sunucu<br />Güvenli Ödeme</span>
            </Secure>
            <Method $width={168}><MoneyIcon /><BankText>BANKA<br />HAVALESİ</BankText></Method>
            <Method $width={123}><PayPalText>Pay<PayPalTail>Pal</PayPalTail></PayPalText></Method>
            <Method $width={122}><TurkcellLogo /></Method>
            <Method $width={86}><VodafoneLogo /></Method>
            <Method $width={64}><AveaLogo /></Method>
            <Method $width={176} $last><CardsLogo /></Method>
          </Payments>
          <CallWidget href="#"><CallIcon />SİZİ ARAYALIM</CallWidget>
          <ChatBar>Canlı Destek (Mesaj Bırak)</ChatBar>
        </PageArea>
        <ScrollTrack><ScrollThumb /></ScrollTrack>
      </Viewport>

      <TaskBar>
        <TaskButton $width={54} aria-label="Başlat"><StartIcon /></TaskButton>
        <TaskButton $width={68} aria-label="Internet Explorer"><IEIcon /></TaskButton>
        <TaskButton $width={60} aria-label="Firefox"><FirefoxIcon /></TaskButton>
        <TaskButton aria-label="Chrome"><ChromeIcon /></TaskButton>
        <TaskButton aria-label="Not Defteri"><NotepadIcon /></TaskButton>
        <TaskButton $width={64} aria-label="FileZilla"><FileZillaIcon /></TaskButton>
        <TaskButton $active $width={58} aria-label="Chrome penceresi"><ChromeIcon /></TaskButton>
        <Tray>
          <UpdateTrayIcon /><PrinterTrayIcon /><GlobeTrayIcon /><EyeTrayIcon />
          <FlagTrayIcon /><NetworkTrayIcon /><SoundTrayIcon />
          <Clock>16:50<br />28.01.2014</Clock>
          <ShowDesktop aria-label="Masaüstünü göster" />
        </Tray>
      </TaskBar>
    </Desktop>
  );
}
